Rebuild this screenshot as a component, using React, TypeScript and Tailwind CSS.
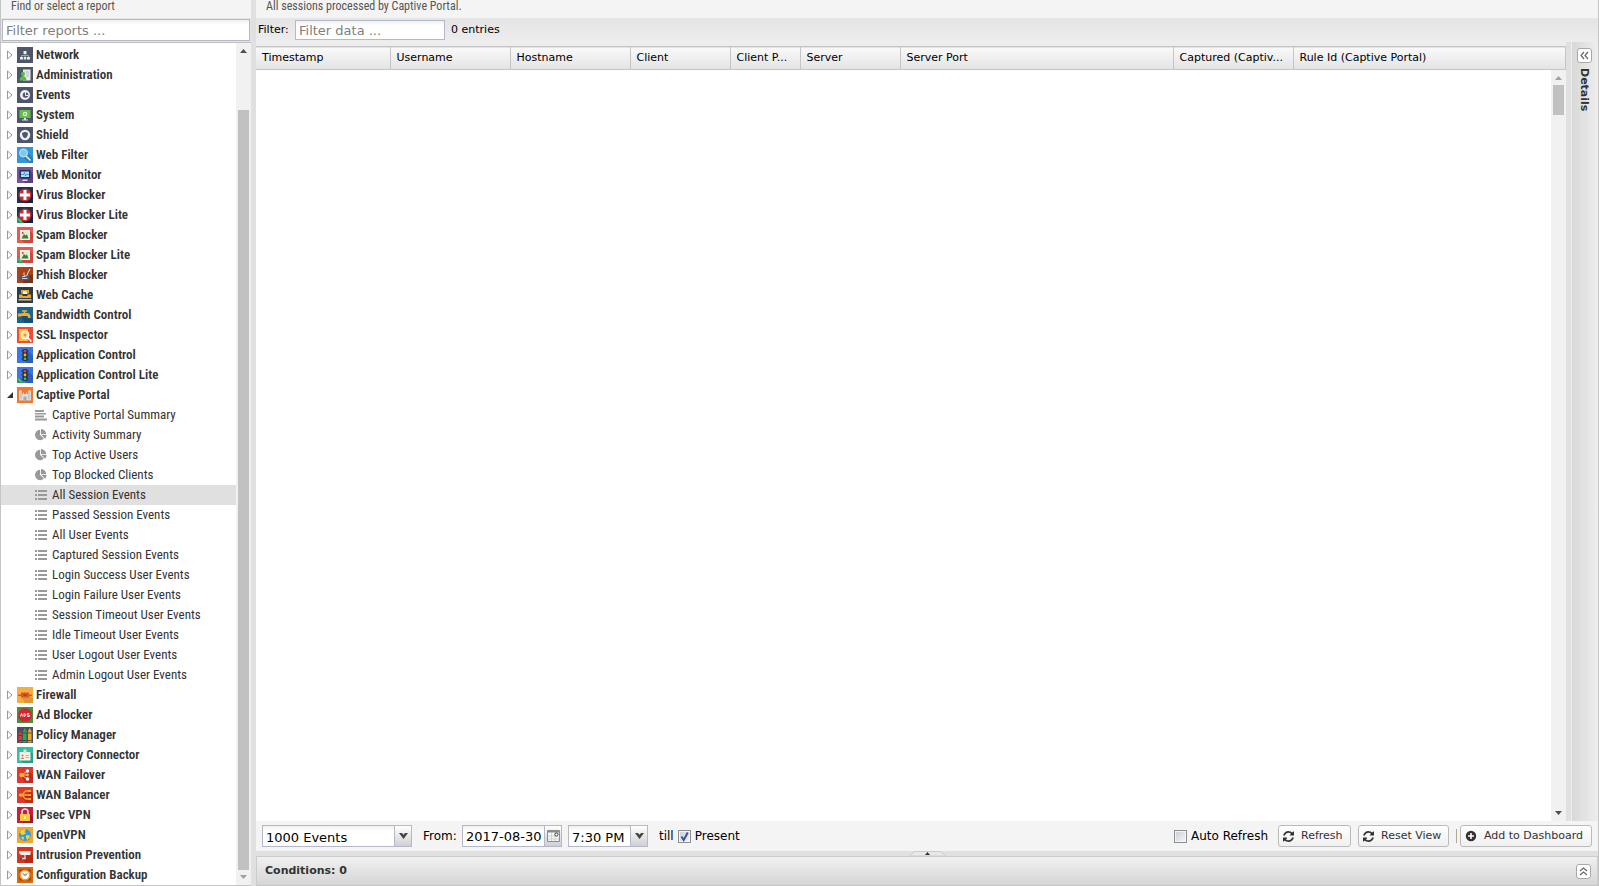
import React, { useState } from "react";

interface Report {
  name: string;
  icon: "text" | "pie" | "list";
}

interface Category {
  name: string;
  icon: React.ReactNode;
  reports?: Report[];
}

const liteRibbon = (
  <>
    <path d="M0 9l7 7H0z" fill="#2c9a63" />
    <path d="M1 11.5l3.500 3.500" stroke="#8fd3ae" strokeWidth="1" />
  </>
);

const virusIcon = (
  <>
    <path d="M0 0h16v16H0z" fill="#22304f" />
    <path d="M12 4l4 4v8H7l-3-4z" fill="#18233c" />
    <circle cx="8" cy="8" r="6.500" fill="#cf2a2c" />
    <path d="M6.500 3h3v3.500H13v3H9.500V13h-3V9.500H3v-3h3.500z" fill="#fff" />
  </>
);

const spamIcon = (
  <>
    <path d="M0 0h16v16H0z" fill="#e85a50" />
    <path d="M13 4l3 3v9H7l-3-4z" fill="#cf463f" />
    <path d="M3 3h10v10H3z" fill="#f3efe0" />
    <path d="M4.500 4.500h7v7h-7z" fill="#d9ecd2" />
    <path d="M4.500 11.500l2.500-4.500 1.500 1.500 1.500-1 1.500 4z" fill="#3f7d3a" />
    <circle cx="5.800" cy="6" r=".9" fill="#d33" />
  </>
);

const lightsIcon = (
  <>
    <path d="M0 0h16v16H0z" fill="#3b78e7" />
    <path d="M10 3l6 6v7h-6l-4-3z" fill="#2c5fc4" />
    <rect x="5.500" y="2" width="5" height="12" rx="1.500" fill="#25303f" />
    <path d="M4.500 4h7M4.500 8h7M4.500 12h7" stroke="#25303f" />
    <circle cx="8" cy="4.200" r="1.400" fill="#e5423a" />
    <circle cx="8" cy="8" r="1.400" fill="#f2b632" />
    <circle cx="8" cy="11.800" r="1.400" fill="#3fbf62" />
  </>
);

const categories: Category[] = [
  {
    name: "Network",
    icon: (
      <>
        <path d="M0 0h16v16H0z" fill="#50566a" />
        <path d="M8 6v3M4.500 11V8.500h7V11M8 8.500V11" stroke="#7bbf6d" fill="none" />
        <path d="M6.500 4h3v3h-3zM3 10h3v2.500H3zM6.800 10h2.500v2.500H6.800zM10 10h3v2.500h-3z" fill="#e9ebee" />
      </>
    ),
  },
  {
    name: "Administration",
    icon: (
      <>
        <path d="M0 0h16v16H0z" fill="#50566a" />
        <path d="M6 2.500h7.500v11H6z" fill="#e9ebee" />
        <path d="M8 5h4M9 7h3M9 9h3" stroke="#a9adb8" strokeWidth=".8" />
        <circle cx="6" cy="7" r="2" fill="#5cb84a" />
        <path d="M2.500 13.500c0-3 1.500-4.500 3.500-4.500s3.500 1.500 3.500 4.500z" fill="#5cb84a" />
      </>
    ),
  },
  {
    name: "Events",
    icon: (
      <>
        <path d="M0 0h16v16H0z" fill="#50566a" />
        <circle cx="8" cy="8" r="5" fill="#eef0f3" />
        <circle cx="8.500" cy="8" r="2.800" fill="#50566a" />
        <path d="M8.500 5v3.500h2.500" stroke="#eef0f3" fill="none" strokeWidth="1" />
      </>
    ),
  },
  {
    name: "System",
    icon: (
      <>
        <path d="M0 0h16v16H0z" fill="#50566a" />
        <path d="M2.500 3h11v8h-11z" fill="#62c04a" />
        <path d="M7 11h2v1.500h2v1H5v-1h2z" fill="#dfe2e6" />
        <circle cx="8" cy="7" r="2.200" fill="#e4f5df" />
        <circle cx="8" cy="7" r="1" fill="#62c04a" />
      </>
    ),
  },
  {
    name: "Shield",
    icon: (
      <>
        <path d="M0 0h16v16H0z" fill="#50566a" />
        <circle cx="8" cy="8" r="5.200" fill="#eef0f3" />
        <path d="M5 6l3-1.200L11 6c0 2.800-1 4.300-3 5.300C6 10.300 5 8.800 5 6z" fill="#50566a" />
      </>
    ),
  },
  {
    name: "Web Filter",
    icon: (
      <>
        <path d="M0 0h16v16H0z" fill="#3497da" />
        <path d="M9 4l7 7v5h-3L4 9z" fill="#2a80bd" />
        <path d="M9 9l4.500 4.500" stroke="#e6eef3" strokeWidth="1.600" />
        <circle cx="6.500" cy="6" r="4" fill="#82c6ee" stroke="#c7e4f5" />
      </>
    ),
  },
  {
    name: "Web Monitor",
    icon: (
      <>
        <path d="M0 0h16v16H0z" fill="#7453a6" />
        <path d="M13 4l3 3v9H8l-3-4z" fill="#5c3f8a" />
        <path d="M2.500 3h11v8.500h-11z" fill="#2b3346" />
        <path d="M4 4.500h8v5.500H4z" fill="#a9dcf7" />
        <path d="M4 7.500h2.500l1-2 1 3.500.8-1.500H12" stroke="#3a86c8" fill="none" strokeWidth=".8" />
        <path d="M5.500 12.500h5V14h-5z" fill="#dfe2e6" />
      </>
    ),
  },
  { name: "Virus Blocker", icon: virusIcon },
  { name: "Virus Blocker Lite", icon: <>{virusIcon}{liteRibbon}</> },
  { name: "Spam Blocker", icon: spamIcon },
  { name: "Spam Blocker Lite", icon: <>{spamIcon}{liteRibbon}</> },
  {
    name: "Phish Blocker",
    icon: (
      <>
        <path d="M0 0h16v16H0z" fill="#a8431a" />
        <path d="M8 8h8v8H6z" fill="#7d3112" />
        <path d="M3 8h9.500v5.500H3z" fill="#4b5468" />
        <path d="M5 9.500h3M5 11.500h5.500" stroke="#dfe2e6" strokeWidth=".9" />
        <path d="M13 2L10 7.500M7 5.500v2c0 2 3.500 2 3.500 0" stroke="#e2e6ee" fill="none" />
      </>
    ),
  },
  {
    name: "Web Cache",
    icon: (
      <>
        <path d="M0 0h16v16H0z" fill="#2a3c52" />
        <path d="M5.500 4h5v3h-5z" fill="#f4f0e3" />
        <path d="M4 3h8v3.500h-1.200V4.200H5.200v2.300H4zM2 7.500h3.500V9h5V7.500H14V11H2z" fill="#f0a51f" />
        <path d="M1.500 12h13v1.500h-13z" fill="#f6bd45" />
      </>
    ),
  },
  {
    name: "Bandwidth Control",
    icon: (
      <>
        <path d="M0 0h16v16H0z" fill="#1b6590" />
        <path d="M10 8l6 5v3H8l-4-6z" fill="#154f72" />
        <path d="M1 6.500h3L5.500 6H10c2.500 0 3.500 1.500 3.500 5H11c0-1.500-.5-2-1.500-2H4.500L4 9.500H1z" fill="#f3ac2b" />
        <path d="M5 4h5M7.500 4v3" stroke="#f3ac2b" strokeWidth="1.400" />
      </>
    ),
  },
  {
    name: "SSL Inspector",
    icon: (
      <>
        <path d="M0 0h16v16H0z" fill="#ef4b36" />
        <path d="M2 2h9v12H2z" fill="#f7c03c" />
        <circle cx="8" cy="8" r="4" fill="#f9dfa0" stroke="#fff" />
        <circle cx="8" cy="8" r="1.500" fill="#f19a2c" />
        <path d="M11 11l3.500 3.500" stroke="#fff" strokeWidth="1.600" />
      </>
    ),
  },
  { name: "Application Control", icon: lightsIcon },
  { name: "Application Control Lite", icon: <>{lightsIcon}{liteRibbon}</> },
  {
    name: "Captive Portal",
    icon: (
      <>
        <path d="M0 0h16v16H0z" fill="#f4772a" />
        <path d="M2 4l1.500-1L5 4v3h1V5.500h1V7h2V5.500h1V7h1V4l1.500-1L14 4v9.500H2z" fill="#d8d8d8" />
        <path d="M6.500 13.500V11a1.500 1.500 0 013 0v2.500z" fill="#a9a9a9" />
        <path d="M4 5v7M12 5v7" stroke="#b5b5b5" strokeWidth=".8" />
      </>
    ),
    reports: [
      { name: "Captive Portal Summary", icon: "text" },
      { name: "Activity Summary", icon: "pie" },
      { name: "Top Active Users", icon: "pie" },
      { name: "Top Blocked Clients", icon: "pie" },
      { name: "All Session Events", icon: "list" },
      { name: "Passed Session Events", icon: "list" },
      { name: "All User Events", icon: "list" },
      { name: "Captured Session Events", icon: "list" },
      { name: "Login Success User Events", icon: "list" },
      { name: "Login Failure User Events", icon: "list" },
      { name: "Session Timeout User Events", icon: "list" },
      { name: "Idle Timeout User Events", icon: "list" },
      { name: "User Logout User Events", icon: "list" },
      { name: "Admin Logout User Events", icon: "list" },
    ],
  },
  {
    name: "Firewall",
    icon: (
      <>
        <path d="M0 0h16v16H0z" fill="#f3b03f" />
        <path d="M9 6l7 5v5H8l-4-6z" fill="#df9a2f" />
        <path d="M1 7.500h14v1.500H1z" fill="#d8552a" />
        <path d="M4 5.500h8v5H4z" fill="#d8552a" />
        <path d="M6.500 7h3v2h-3z" fill="#b93f1c" />
      </>
    ),
  },
  {
    name: "Ad Blocker",
    icon: (
      <>
        <path d="M0 0h16v16H0z" fill="#4a8f3c" />
        <path d="M5 1.500h6L14.500 5v6L11 14.500H5L1.500 11V5z" fill="#d3242f" />
        <path d="M3.500 9.500l1-3 1 3M7 6.500v3c2.200 0 2.200-3 0-3zM12.300 6.500h-2v1.500h2v1.500h-2" stroke="#fff" fill="none" strokeWidth=".9" />
      </>
    ),
  },
  {
    name: "Policy Manager",
    icon: (
      <>
        <path d="M0 0h16v16H0z" fill="#4a5064" />
        <path d="M1.500 7L3.300 4 5 7v8.500H1.500z" fill="#d93a2b" />
        <path d="M6 4l1.800-3L9.500 4v11.500H6z" fill="#2fa84f" />
        <path d="M11 4l1.800-3L14.500 4v11.500H11z" fill="#efa72a" />
        <path d="M1.500 8.500H5M6 6h3.500M11 6h3.500M1.500 13.500H5M6 13.500h3.500M11 13.500h3.500" stroke="#333a4a" strokeWidth=".8" />
      </>
    ),
  },
  {
    name: "Directory Connector",
    icon: (
      <>
        <path d="M0 0h16v16H0z" fill="#2fc2a2" />
        <path d="M14 5l2 2v9H6l-3-3z" fill="#25a387" />
        <path d="M2.500 5h11v8.500h-11z" fill="#f6f1e6" />
        <path d="M6.500 2.500h3V6h-3z" fill="#e5e0d2" />
        <circle cx="5.500" cy="8.500" r="1" fill="#e2703c" />
        <path d="M4 12c0-2 3-2 3 0z" fill="#e2703c" />
        <path d="M8.500 8.500H12M8.500 10.500H12" stroke="#b9b4a6" strokeWidth=".9" />
      </>
    ),
  },
  {
    name: "WAN Failover",
    icon: (
      <>
        <path d="M0 0h16v16H0z" fill="#e0392b" />
        <path d="M12 5l4 3v8H8l-3-6z" fill="#c22c20" />
        <path d="M5 8l5-4M5 8h5M5 8l5 4" stroke="#f6c3a0" />
        <circle cx="4.500" cy="8" r="2.200" fill="#f7b32e" />
        <circle cx="10.500" cy="4" r="1.700" fill="#fff" />
        <circle cx="10.500" cy="8" r="1.400" fill="#f7b32e" />
        <circle cx="10.500" cy="12" r="1.700" fill="#fff" />
      </>
    ),
  },
  {
    name: "WAN Balancer",
    icon: (
      <>
        <path d="M0 0h16v16H0z" fill="#e0392b" />
        <path d="M13 4l3 3v9H9l-4-6z" fill="#c22c20" />
        <path d="M2 8h11M12.500 4H9C7 4 6.500 8 4 8c2.500 0 3 4 5 4h3.500" stroke="#f9ac2e" strokeWidth="1.300" fill="none" />
        <path d="M11.500 3h2.500v2h-2.500zM11.500 7h2.500v2h-2.500zM11.500 11h2.500v2h-2.500z" fill="#f9ac2e" />
        <circle cx="3.500" cy="8" r="1.700" fill="#f9ac2e" />
      </>
    ),
  },
  {
    name: "IPsec VPN",
    icon: (
      <>
        <path d="M0 0h16v16H0z" fill="#c41f42" />
        <path d="M13 7l3 3v6H6l-3-3z" fill="#9f1733" />
        <path d="M5 8V5a3 3 0 016 0v3" stroke="#e8e3dc" strokeWidth="1.500" fill="none" />
        <path d="M3 7h10v7H3z" fill="#f8cb3b" />
        <path d="M7.500 9h1v3h-1z" fill="#fff" />
      </>
    ),
  },
  {
    name: "OpenVPN",
    icon: (
      <>
        <path d="M0 0h16v16H0z" fill="#f6a62b" />
        <circle cx="8" cy="8" r="6" fill="#2f9be0" />
        <path d="M3 5c2-3 4-3 6-2.500L7.500 5 9 6.500 6 8 4 7.500zM9 8l4 .5c0 2-1.500 4-3 4.500L9 10.500zM4.500 9.500L7 10l-.5 3c-1.500-.5-2.500-2-2-3.500z" fill="#f6cf3a" />
      </>
    ),
  },
  {
    name: "Intrusion Prevention",
    icon: (
      <>
        <path d="M0 0h16v16H0z" fill="#d9341f" />
        <path d="M13 5l3 3v8H8l-3-6z" fill="#b82813" />
        <path d="M2 4h11.500v4H4L2 6z" fill="#f1f1f1" />
        <path d="M2 4h11.500v1.300H2z" fill="#c9ccd2" />
        <path d="M8 8v3.500H4.500" stroke="#e3e3e3" strokeWidth="1.300" fill="none" />
        <circle cx="4" cy="12" r="1.400" fill="#4b5468" />
      </>
    ),
  },
  {
    name: "Configuration Backup",
    icon: (
      <>
        <path d="M0 0h16v16H0z" fill="#d9690f" />
        <path d="M2.500 2.500h11v11h-11z" fill="#8c4308" />
        <circle cx="8" cy="8" r="5.600" fill="#f39a2d" />
        <circle cx="8" cy="8" r="4" fill="#fbf7ef" />
        <path d="M6 6.500L8 8.500l2-2" stroke="#444" fill="none" />
      </>
    ),
  },
];

const columns = [
  { name: "Timestamp", width: "w-[134px]" },
  { name: "Username", width: "w-[120px]" },
  { name: "Hostname", width: "w-[120px]" },
  { name: "Client", width: "w-[100px]" },
  { name: "Client P...", title: "Client Port", width: "w-[70px]" },
  { name: "Server", width: "w-[100px]" },
  { name: "Server Port", width: "w-[273px]" },
  { name: "Captured (Captiv...", title: "Captured (Captive Portal)", width: "w-[120px]" },
  { name: "Rule Id (Captive Portal)", width: "w-auto" },
];

const condensed = "font-['Roboto_Condensed','Liberation_Sans_Narrow',Roboto,sans-serif]";

const ReportIcon: React.FC<{ icon: Report["icon"] }> = ({ icon }) => {
  if (icon === "pie") {
    return (
      <svg viewBox="0 0 1792 1792" className="size-3 shrink-0 fill-[#999]">
        <path d="M768 890l546 546q-106 108-247.500 168t-298.500 60q-209 0-385.500-103t-279.500-279.500-103-385.500 103-385.500 279.500-279.500 385.500-103v762zm187 6h773q0 157-60 298.500t-168 247.500zm709-128h-768v-768q209 0 385.500 103t279.500 279.500 103 385.500z" />
      </svg>
    );
  }
  return (
    <svg viewBox="0 0 12 12" className="size-3 shrink-0 fill-[#999]">
      {icon === "text" ? (
        <path d="M0 1h9v2H0zM0 4h11v1.500H0zM0 6.500h9v2H0zM0 9.500h12v2H0z" />
      ) : (
        <path d="M0 1h2v2H0zM0 5h2v2H0zM0 9h2v2H0zM3 1h9v2H3zM3 5h9v2H3zM3 9h9v2H3z" />
      )}
    </svg>
  );
};

const RefreshIcon = () => (
  <svg viewBox="0 0 1536 1536" className="size-[11px] shrink-0 fill-[#333]">
    <path d="M1511 928q0 5-1 7-64 268-268 434.500t-478 166.500q-146 0-282.500-55t-243.500-157l-129 129q-19 19-45 19t-45-19-19-45v-448q0-26 19-45t45-19h448q26 0 45 19t19 45-19 45l-137 137q71 66 161 102t187 36q134 0 250-65t186-179q11-17 53-117 8-23 30-23h192q13 0 22.500 9.500t9.500 22.500zm25-800v448q0 26-19 45t-45 19h-448q-26 0-45-19t-19-45 19-45l138-138q-148-137-349-137-134 0-250 65t-186 179q-11 17-53 117-8 23-30 23h-199q-13 0-22.500-9.500t-9.500-22.500v-7q65-268 270-434.500t480-166.500q146 0 284 55.500t245 156.500l130-129q19-19 45-19t45 19 19 45z" />
  </svg>
);

const ScrollArrow: React.FC<{ down?: boolean; dim?: boolean }> = ({ down, dim }) => (
  <svg viewBox="0 0 7 4" className={`w-[7px] h-1 shrink-0 ${dim ? "fill-[#a0a0a0]" : "fill-[#505050]"}`}>
    <path d={down ? "M0 0h7L3.500 4z" : "M0 4h7L3.500 0z"} />
  </svg>
);

const Combo: React.FC<{ label: string; value: string; width: string }> = ({ label, value, width }) => (
  <div className={`flex h-[22px] border border-[#b5b8c8] bg-white ${width}`}>
    <select
      aria-label={label}
      className="appearance-none flex-1 min-w-0 px-[3px] pt-0.5 text-[13px] text-black bg-linear-to-b from-[#eef1f1] to-white to-25% outline-none"
    >
      <option>{value}</option>
    </select>
    <span className="pointer-events-none flex w-[17px] items-center justify-center border-l border-[#b5b8c8] bg-linear-to-b from-white to-[#d0d0d0]">
      <svg viewBox="0 0 9 6" className="w-[9px] h-1.5">
        <path d="M0 0h3l1.500 1.800L6 0h3L4.500 6z" fill="#444" />
      </svg>
    </span>
  </div>
);

const Check: React.FC<{ label: string; defaultChecked?: boolean }> = ({ label, defaultChecked }) => (
  <label className="flex items-center gap-1 text-[12px] text-black">
    <span className="grid size-[13px] place-items-center border border-[#8e8f8f] bg-linear-to-br from-[#c9cfd6] to-[#f6f6f6] shadow-[inset_0_0_0_1px_#f4f4f4]">
      <input type="checkbox" defaultChecked={defaultChecked} className="peer appearance-none col-start-1 row-start-1 size-[11px]" />
      <svg viewBox="0 0 11 11" className="pointer-events-none col-start-1 row-start-1 hidden size-[11px] peer-checked:block">
        <path d="M2.500 5.500L4.700 9 8.800 1.500" stroke="#3d519c" strokeWidth="2" fill="none" />
      </svg>
    </span>
    {label}
  </label>
);

const ToolButton: React.FC<{ label: string; children: React.ReactNode }> = ({ label, children }) => (
  <button
    aria-label={label}
    className="grid size-[15px] shrink-0 place-items-center rounded-[3px] border border-[#a8a8a8] bg-white"
  >
    <svg viewBox="0 0 9 9" className="size-[9px]" fill="none" stroke="#666" strokeWidth="1.200">
      {children}
    </svg>
  </button>
);

const PushButton: React.FC<{ icon: React.ReactNode; children: React.ReactNode; width: string }> = ({ icon, children, width }) => (
  <button
    className={`flex h-[22px] items-center gap-[7px] rounded-[3px] border border-[#bbb] bg-linear-to-b from-white to-[#f0f0f0] pl-1 text-[11px] whitespace-nowrap text-[#333] ${width}`}
  >
    {icon}
    {children}
  </button>
);

const Sidebar: React.FC = () => {
  const [selected, setSelected] = useState("All Session Events");

  return (
    <aside className="flex w-[251px] shrink-0 flex-col border-b border-l border-[#c5c5c5] bg-white">
      <div className={`h-[18px] bg-[#f4f4f4] pl-2.5 text-[12px]/[12px] text-[#555] ${condensed}`}>
        Find or select a report
      </div>
      <div className="flex h-[25px] items-start border-b border-[#c0c0c0] bg-[#e4e4e4] px-px pt-px">
        <input
          aria-label="Filter reports"
          placeholder="Filter reports ..."
          className="h-[22px] w-full border border-[#b5b8c8] bg-white bg-linear-to-b from-[#eef1f1] to-white to-25% px-[3px] text-[13px] outline-none placeholder:text-[#808080]"
        />
      </div>
      <div className="flex flex-1">
        <ul className={`flex-1 pt-0.5 text-[13px]/[20px] text-[#333] ${condensed}`}>
          {categories.map(({ name, icon, reports }) => (
            <li key={name}>
              <div className="flex h-5 items-center pl-1.5 font-semibold">
                <svg viewBox="0 0 6 10" className="mr-1 h-2.5 w-1.5 shrink-0">
                  {reports ? (
                    <path d="M6 2v6H0z" fill="#333" />
                  ) : (
                    <path d="M.5 1v8L5 5z" fill="#fff" stroke="#999" />
                  )}
                </svg>
                <svg viewBox="0 0 16 16" className="mr-[3px] size-4 shrink-0">
                  {icon}
                </svg>
                {name}
              </div>
              {reports && (
                <ul>
                  {reports.map((report) => (
                    <li key={report.name}>
                      <button
                        onClick={() => setSelected(report.name)}
                        className={`flex h-5 w-full items-center gap-[5px] pl-[34px] ${selected === report.name ? "bg-[#e0e0e0]" : ""}`}
                      >
                        <ReportIcon icon={report.icon} />
                        {report.name}
                      </button>
                    </li>
                  ))}
                </ul>
              )}
            </li>
          ))}
        </ul>
        <div className="flex w-[15px] flex-col items-center bg-[#f1f1f1] pt-1.5 pb-1.5">
          <ScrollArrow />
          <div className="mt-[57px] mb-[5px] w-[11px] flex-1 bg-[#c1c1c1]" />
          <ScrollArrow down dim />
        </div>
      </div>
    </aside>
  );
};

const App: React.FC = () => {
  return (
    <div className="flex min-h-screen bg-[#e0e0e0] font-['DejaVu_Sans',sans-serif]">
      <Sidebar />
      <main className="ml-[5px] flex min-w-0 flex-1 flex-col border-r border-b border-[#c5c5c5]">
        <div className={`h-[18px] bg-[#f4f4f4] pl-2.5 text-[12px]/[12px] text-[#555] ${condensed}`}>
          All sessions processed by Captive Portal.
        </div>
        <div className="flex h-6 items-center bg-linear-to-b from-[#e4e4e4] to-[#ededed] pl-0.5 text-[11px] text-black">
          <label htmlFor="filter-data" className="w-[37px]">
            Filter:
          </label>
          <input
            id="filter-data"
            placeholder="Filter data ..."
            className="h-5 w-[150px] border border-[#b5b8c8] bg-white bg-linear-to-b from-[#eef1f1] to-white to-25% px-[3px] text-[13px] outline-none placeholder:text-[#808080]"
          />
          <span className="ml-1.5">0 entries</span>
        </div>

        <div className="flex flex-1">
          <div className="flex min-w-0 flex-1 flex-col bg-white">
            <div className="h-1 bg-[#ededed]" />
            <table className="w-full table-fixed border-collapse text-[11px] text-black">
              <thead>
                <tr className="h-[23px] border-y border-[#c5c5c5] bg-linear-to-b from-[#f9f9f9] to-[#e3e4e6]">
                  {columns.map(({ name, title, width }) => (
                    <th
                      key={name}
                      title={title}
                      className={`border-r border-[#c5c5c5] px-1.5 text-left font-normal whitespace-nowrap ${width}`}
                    >
                      {name}
                    </th>
                  ))}
                </tr>
              </thead>
            </table>
            <div className="flex flex-1 justify-end">
              <div className="flex w-[15px] flex-col items-center bg-[#f1f1f1] py-1.5">
                <ScrollArrow dim />
                <div className="mt-[5px] mb-auto h-[30px] w-[11px] bg-[#c1c1c1]" />
                <ScrollArrow down />
              </div>
            </div>
          </div>
          <div className="ml-[5px] flex w-[27px] flex-col items-center gap-[5px] border-l border-[#f0f0f0] bg-linear-to-r from-[#d8d8d8] to-[#eee] pt-1.5 pr-0.5">
            <ToolButton label="Expand details">
              <path d="M4 1L1 4.500 4 8M8 1L5 4.500 8 8" />
            </ToolButton>
            <span className="text-[11px] font-bold text-[#333] [writing-mode:vertical-rl]">Details</span>
          </div>
        </div>

        <div className="flex h-[30px] items-center bg-[#f4f4f4] px-1.5 text-[12px] text-black">
          <Combo label="Maximum events" value="1000 Events" width="w-[150px]" />
          <label htmlFor="from-date" className="ml-[11px] w-[39px]">
            From:
          </label>
          <div className="flex h-[22px] w-[100px] border border-[#b5b8c8]">
            <input
              id="from-date"
              defaultValue="2017-08-30"
              className="min-w-0 flex-1 bg-white bg-linear-to-b from-[#eef1f1] to-white to-25% pt-0.5 pl-[3px] text-[13px] outline-none"
            />
            <button
              aria-label="Pick a date"
              className="grid w-[17px] place-items-center border-l border-[#b5b8c8] bg-linear-to-b from-white to-[#d0d0d0]"
            >
              <svg viewBox="0 0 13 12" className="h-3 w-[13px]">
                <path d="M.5.5h12v11H.5z" fill="#f7f7f7" stroke="#8c8c8c" />
                <path d="M1 1h11v1.500H1z" fill="#8c8c8c" />
                <path d="M1 6h7M1 9h11M4.500 3v8M8 3v8" stroke="#ccc" strokeWidth=".8" />
                <circle cx="9.500" cy="4.500" r="1.600" fill="#fff" stroke="#333" />
              </svg>
            </button>
          </div>
          <div className="ml-1.5">
            <Combo label="From time" value="7:30 PM" width="w-20" />
          </div>
          <span className="mr-1 ml-[11px]">till</span>
          <Check label="Present" defaultChecked />
          <div className="ml-auto flex items-center">
            <Check label="Auto Refresh" />
            <div className="ml-2.5 flex gap-[7px]">
              <PushButton icon={<RefreshIcon />} width="w-[73px]">
                Refresh
              </PushButton>
              <PushButton icon={<RefreshIcon />} width="w-[91px]">
                Reset View
              </PushButton>
            </div>
            <span className="mr-[3px] ml-[7px] h-3.5 w-px bg-[#b3a98c]" />
            <PushButton
              width="w-[132px]"
              icon={
                <svg viewBox="0 0 12 12" className="size-3 shrink-0">
                  <circle cx="6" cy="6" r="5.200" fill="#333" />
                  <path d="M6 3v6M3 6h6" stroke="#fff" strokeWidth="1.600" />
                </svg>
              }
            >
              Add to Dashboard
            </PushButton>
          </div>
        </div>

        <button aria-label="Toggle conditions" className="flex h-[5px] justify-center bg-[#e0e0e0]">
          <svg viewBox="0 0 35 5" className="h-[5px] w-[35px]">
            <path d="M0 5L4 .5h27L35 5z" fill="#e8e8e8" stroke="#ccc" />
            <path d="M15 4h5l-2.500-3z" fill="#333" />
          </svg>
        </button>

        <div className="flex h-[29px] items-center justify-between border-t border-r border-l border-[#ccc] bg-linear-to-b from-[#f0f0f0] to-[#d6d6d6] pr-1.5 pl-2">
          <h2 className="text-[11px] font-bold text-[#333]">Conditions: 0</h2>
          <ToolButton label="Expand conditions">
            <path d="M1 4L4.500 1 8 4M1 8L4.500 5 8 8" />
          </ToolButton>
        </div>
      </main>
    </div>
  );
};

export default App;
